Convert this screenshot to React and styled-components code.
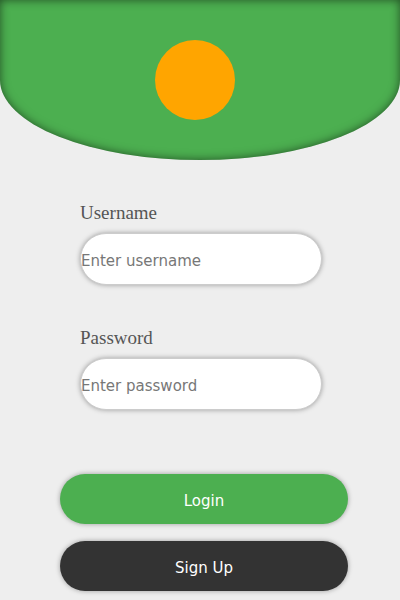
import React from "react";
import styled, { createGlobalStyle } from "styled-components";

const GlobalStyle = createGlobalStyle`
  html, body {
    margin: 0;
    padding: 0;
    background: #eeeeee;
  }
  * {
    box-sizing: border-box;
  }
`;

const Page = styled.div`
  width: 400px;
  height: 600px;
  display: flex;
  flex-direction: column;
  overflow: hidden;
`;

const Header = styled.div`
  height: 160px;
  background-color: #4caf50;
  border-radius: 0 0 50% 50%;
  box-shadow: inset 0 0 10px rgba(0, 0, 0, 0.55);
  display: flex;
  align-items: center;
  justify-content: center;
`;

const Logo = styled.div`
  width: 80px;
  height: 80px;
  margin-right: 10px;
  border-radius: 50%;
  background-color: #ffa500;
`;

const Form = styled.form`
  display: flex;
  flex-direction: column;
  padding: 42px 0 0 80px;
`;

const Field = styled.div`
  display: flex;
  flex-direction: column;
  gap: 10px;
  margin-bottom: ${props => props.$spacing || 0}px;
`;

const Label = styled.label`
  font-family: "Liberation Serif", "Times New Roman", serif;
  font-size: 19px;
  line-height: 21px;
  color: #555555;
`;

const Input = styled.input`
  width: 242px;
  height: 52px;
  padding: 3px 0 0 0;
  border: 1px solid #cccccc;
  border-radius: 26px;
  background: #ffffff;
  box-shadow: 0 0 5px rgba(0, 0, 0, 0.35);
  font-family: "DejaVu Sans", Verdana, sans-serif;
  font-size: 15px;
  color: #333333;
  outline: none;

  &::placeholder {
    color: #777777;
  }
`;

const Buttons = styled.div`
  display: flex;
  flex-direction: column;
  gap: 17px;
  padding: 64px 0 0 60px;
`;

const ActionButton = styled.button`
  width: 288px;
  height: 50px;
  padding: 3px 0 0 0;
  border: none;
  border-radius: 25px;
  background-color: ${props => (props.$dark ? "#333333" : "#4caf50")};
  color: #ffffff;
  font-family: "DejaVu Sans", Verdana, sans-serif;
  font-size: 15px;
  box-shadow: 0 0 5px rgba(0, 0, 0, 0.35);
  cursor: pointer;
`;

const App = () => (
  <>
    <GlobalStyle />
    <Page>
      <Header>
        <Logo />
      </Header>
      <Form onSubmit={e => e.preventDefault()}>
        <Field $spacing={42}>
          <Label htmlFor="username">Username</Label>
          <Input id="username" type="text" placeholder="Enter username" />
        </Field>
        <Field>
          <Label htmlFor="password">Password</Label>
          <Input id="password" type="password" placeholder="Enter password" />
        </Field>
      </Form>
      <Buttons>
        <ActionButton type="button">Login</ActionButton>
        <ActionButton type="button" $dark>
          Sign Up
        </ActionButton>
      </Buttons>
    </Page>
  </>
);

export default App;
